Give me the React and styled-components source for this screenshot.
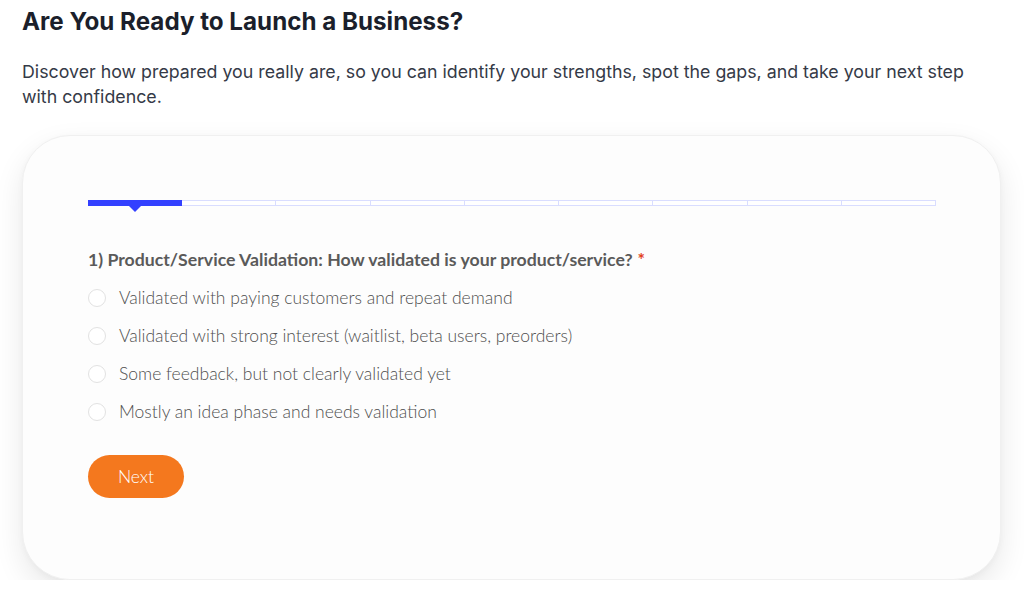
import React, { useState } from 'react';
import styled, { createGlobalStyle } from 'styled-components';

const GlobalStyle = createGlobalStyle`
  html, body {
    margin: 0;
    padding: 0;
    background: #ffffff;
  }
  body {
    font-family: Inter, "Liberation Sans", sans-serif;
    -webkit-font-smoothing: antialiased;
  }
`;

const Page = styled.div`
  padding: 6px 23px 0 22px;
`;

const Title = styled.h1`
  margin: 0;
  font-size: 24.2px;
  line-height: 32px;
  font-weight: 650;
  color: #1b1f2b;
`;

const Intro = styled.p`
  margin: 21px 0 0;
  max-width: 960px;
  font-size: 17.8px;
  line-height: 25px;
  color: #353a47;
`;

const Card = styled.section`
  margin-top: 26px;
  height: 445px;
  box-sizing: border-box;
  padding: 64px 64px 0 65px;
  background: #fdfdfd;
  border: 1px solid #f0f0f0;
  border-radius: 48px;
  box-shadow: 0 12px 30px rgba(0, 0, 0, 0.09), 0 2px 6px rgba(0, 0, 0, 0.03);
`;

const Progress = styled.div`
  display: grid;
  grid-template-columns: repeat(${({ steps }) => steps}, 1fr);
  height: 6px;
`;

const Step = styled.div`
  position: relative;
  box-sizing: border-box;
  height: 6px;
  background: ${({ active }) => (active ? '#3340ff' : '#ffffff')};
  border: 1px solid ${({ active }) => (active ? '#3340ff' : '#d9ddff')};
  border-left-width: ${({ first }) => (first ? '1px' : '0')};

  &::after {
    content: '';
    display: ${({ active }) => (active ? 'block' : 'none')};
    position: absolute;
    left: 50%;
    top: 5px;
    margin-left: -6px;
    border-left: 6px solid transparent;
    border-right: 6px solid transparent;
    border-top: 6px solid #3340ff;
  }
`;

const Question = styled.div`
  margin-top: 44px;
  font-family: Lato, sans-serif;
  font-size: 17.7px;
  font-weight: 700;
  line-height: 20px;
  color: #5a5a5a;
`;

const Required = styled.span`
  color: #e2401c;
  margin-left: 5px;
`;

const Options = styled.div`
  margin-top: 18px;
  display: flex;
  flex-direction: column;
  gap: 18px;
`;

const Option = styled.label`
  display: flex;
  align-items: center;
  gap: 13px;
  cursor: pointer;
  font-family: Lato, sans-serif;
  font-size: 17.5px;
  font-weight: 300;
  line-height: 20px;
  color: #4f4f4f;
`;

const Radio = styled.span`
  width: 18px;
  height: 18px;
  border-radius: 50%;
  border: 1px solid #e2e2e2;
  background: #ffffff;
  box-sizing: border-box;
  flex-shrink: 0;
  position: relative;

  &::after {
    content: '';
    display: ${({ checked }) => (checked ? 'block' : 'none')};
    position: absolute;
    inset: 4px;
    border-radius: 50%;
    background: #3340ff;
  }
`;

const NextButton = styled.button`
  margin-top: 33px;
  width: 96px;
  height: 43px;
  border: none;
  border-radius: 22px;
  background: #f4781e;
  color: #ffffff;
  font-family: Lato, sans-serif;
  font-size: 17.5px;
  font-weight: 300;
  cursor: pointer;
`;

const answers = [
  'Validated with paying customers and repeat demand',
  'Validated with strong interest (waitlist, beta users, preorders)',
  'Some feedback, but not clearly validated yet',
  'Mostly an idea phase and needs validation',
];

const STEPS = 9;

export default function App() {
  const [choice, setChoice] = useState(null);

  return (
    <Page>
      <GlobalStyle />
      <Title>Are You Ready to Launch a Business?</Title>
      <Intro>
        Discover how prepared you really are, so you can identify your strengths, spot the gaps, and take your next step
        with confidence.
      </Intro>
      <Card>
        <Progress steps={STEPS}>
          {Array.from({ length: STEPS }, (_, i) => (
            <Step key={i} active={i === 0} first={i === 0} />
          ))}
        </Progress>
        <Question>
          1) Product/Service Validation: How validated is your product/service?
          <Required>*</Required>
        </Question>
        <Options>
          {answers.map((text, i) => (
            <Option key={text} onClick={() => setChoice(i)}>
              <Radio checked={choice === i} />
              {text}
            </Option>
          ))}
        </Options>
        <NextButton>Next</NextButton>
      </Card>
    </Page>
  );
}
